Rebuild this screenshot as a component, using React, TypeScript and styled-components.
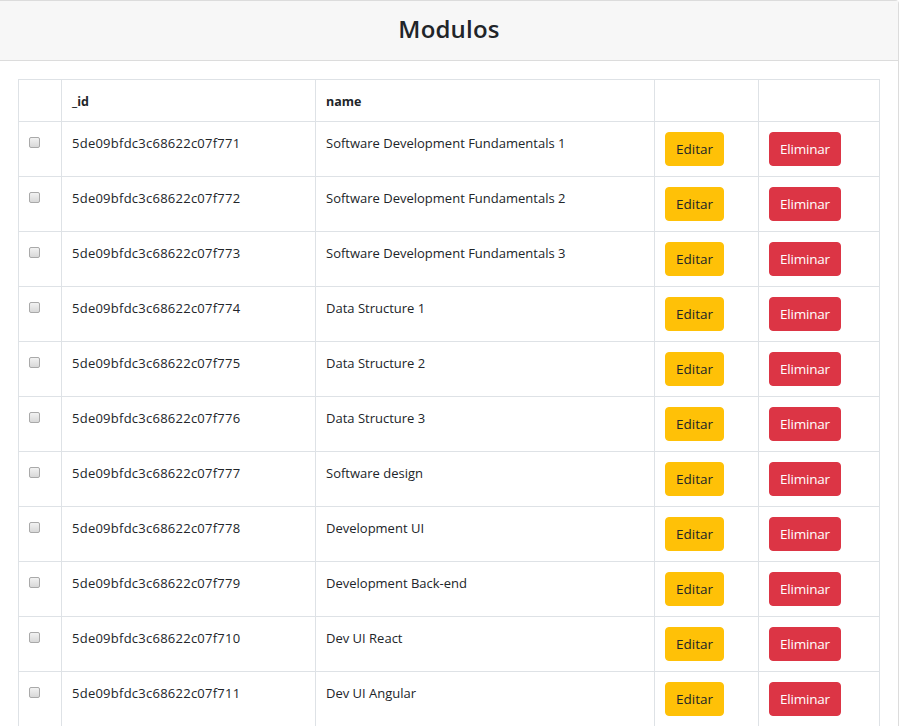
import React from "react";
import styled, { createGlobalStyle } from "styled-components";

const GlobalStyle = createGlobalStyle`
  html, body { margin: 0; padding: 0; background: #fff; }
  body {
    font-family: "Open Sans", "Noto Sans", "Liberation Sans", sans-serif;
    color: #212529;
  }
`;

const Card = styled.div`
  width: 899px;
  box-sizing: border-box;
  border: 1px solid #dcdcdc;
  border-left: none;
  border-radius: 0 4px 0 0;
  background: #fff;
`;

const CardHeader = styled.div`
  height: 59px;
  background: #f7f7f7;
  border-bottom: 1px solid #dcdcdc;
  display: flex;
  align-items: center;
  justify-content: center;
`;

const Title = styled.h1`
  margin: 0;
  font-size: 24px;
  font-weight: 600;
  color: #212529;
  letter-spacing: 0.2px;
  transform: translateY(-2px);
`;

const CardBody = styled.div`
  padding: 18px;
`;

const Table = styled.table`
  width: 862px;
  border-collapse: collapse;
  table-layout: fixed;
  font-size: 13px;
`;

const Th = styled.th<{ $w: number }>`
  box-sizing: border-box;
  width: ${(p) => p.$w}px;
  border: 1px solid #dee2e6;
  padding: 12px 10px 8px;
  height: 42px;
  line-height: 20px;
  text-align: left;
  font-weight: 700;
  font-size: 12.5px;
  vertical-align: top;
`;

const Td = styled.td<{ $mono?: boolean }>`
  border: 1px solid #dee2e6;
  padding: 10px 10px;
  height: 34px;
  line-height: 22px;
  vertical-align: top;
  color: #212529;
  white-space: nowrap;
  letter-spacing: ${(p) => (p.$mono ? "0.25px" : "0")};
`;

const CheckBox = styled.span`
  display: block;
  width: 9px;
  height: 9px;
  margin: 5px 0 0 0;
  border: 1px solid #a9a9a9;
  border-radius: 2px;
  background: linear-gradient(#f2f2f2, #d8d8d8);
`;

const Button = styled.button<{ $variant: "warning" | "danger" }>`
  display: inline-block;
  box-sizing: border-box;
  height: 34px;
  padding: 0 10px;
  border: 1px solid ${(p) => (p.$variant === "warning" ? "#ffc107" : "#dc3545")};
  background: ${(p) => (p.$variant === "warning" ? "#ffc107" : "#dc3545")};
  color: ${(p) => (p.$variant === "warning" ? "#212529" : "#fff")};
  border-radius: 4px;
  font-family: inherit;
  font-size: 13.5px;
  letter-spacing: ${(p) => (p.$variant === "danger" ? "-0.2px" : "0")};
  line-height: 32px;
  cursor: pointer;
  vertical-align: top;
`;

const rows: [string, string][] = [
  ["5de09bfdc3c68622c07f771", "Software Development Fundamentals 1"],
  ["5de09bfdc3c68622c07f772", "Software Development Fundamentals 2"],
  ["5de09bfdc3c68622c07f773", "Software Development Fundamentals 3"],
  ["5de09bfdc3c68622c07f774", "Data Structure 1"],
  ["5de09bfdc3c68622c07f775", "Data Structure 2"],
  ["5de09bfdc3c68622c07f776", "Data Structure 3"],
  ["5de09bfdc3c68622c07f777", "Software design"],
  ["5de09bfdc3c68622c07f778", "Development UI"],
  ["5de09bfdc3c68622c07f779", "Development Back-end"],
  ["5de09bfdc3c68622c07f710", "Dev UI React"],
  ["5de09bfdc3c68622c07f711", "Dev UI Angular"],
];

export default function App() {
  return (
    <>
      <GlobalStyle />
      <Card>
        <CardHeader>
          <Title>Modulos</Title>
        </CardHeader>
        <CardBody>
          <Table>
            <thead>
              <tr>
                <Th $w={43}></Th>
                <Th $w={254}>_id</Th>
                <Th $w={339}>name</Th>
                <Th $w={104}></Th>
                <Th $w={121}></Th>
              </tr>
            </thead>
            <tbody>
              {rows.map(([id, name]) => (
                <tr key={id}>
                  <Td>
                    <CheckBox />
                  </Td>
                  <Td $mono>{id}</Td>
                  <Td>{name}</Td>
                  <Td>
                    <Button $variant="warning">Editar</Button>
                  </Td>
                  <Td>
                    <Button $variant="danger">Eliminar</Button>
                  </Td>
                </tr>
              ))}
            </tbody>
          </Table>
        </CardBody>
      </Card>
    </>
  );
}
